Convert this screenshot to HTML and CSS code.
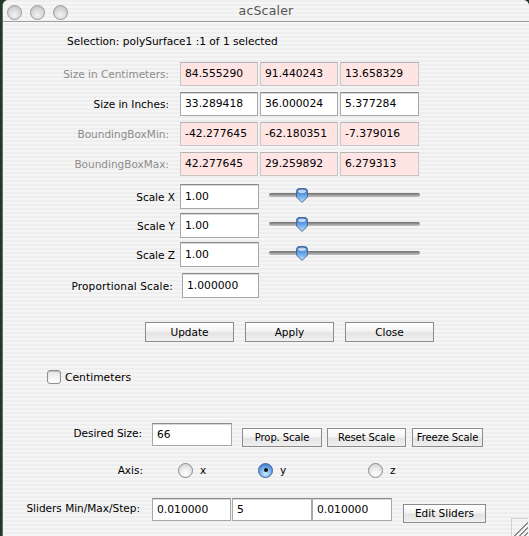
FILE: index.html
```html
<!DOCTYPE html>
<html>
<head>
<meta charset="utf-8">
<link rel="stylesheet" href="styles.css">
</head>
<body>
<div class="window">
  <div class="titlebar">
    <div class="lights"><span class="light"></span><span class="light"></span><span class="light"></span></div>
    <div class="title">acScaler</div>
  </div>
  <div class="content">
    <div class="selection">Selection: polySurface1 :1 of 1 selected</div>

    <div class="toprows">
      <div class="row">
        <div class="lbl lbl-top dis">Size in Centimeters:</div>
        <div class="fields3"><div class="fld pink w78">84.555290</div><div class="fld pink w78">91.440243</div><div class="fld pink w79">13.658329</div></div>
      </div>
      <div class="row">
        <div class="lbl lbl-top">Size in Inches:</div>
        <div class="fields3"><div class="fld w78">33.289418</div><div class="fld w78">36.000024</div><div class="fld w79">5.377284</div></div>
      </div>
      <div class="row">
        <div class="lbl lbl-top dis">BoundingBoxMin:</div>
        <div class="fields3"><div class="fld pink w78">-42.277645</div><div class="fld pink w78">-62.180351</div><div class="fld pink w79">-7.379016</div></div>
      </div>
      <div class="row">
        <div class="lbl lbl-top dis">BoundingBoxMax:</div>
        <div class="fields3"><div class="fld pink w78">42.277645</div><div class="fld pink w78">29.259892</div><div class="fld pink w79">6.279313</div></div>
      </div>
    </div>

    <div class="scalerows">
      <div class="row srow">
        <div class="lbl lbl-scale">Scale X</div>
        <div class="fld w79 tall">1.00</div>
        <div class="slider"><div class="track"></div>
          <svg class="thumb" width="14" height="17" viewBox="0 0 14 17"><defs><linearGradient id="t1" x1="0" y1="0" x2="0" y2="1"><stop offset="0" stop-color="#2f6cc0"/><stop offset=".55" stop-color="#6eaaea"/><stop offset="1" stop-color="#c4e4ff"/></linearGradient></defs><path d="M1.5 4.5 Q1.5 1.5 4.5 1.5 H9.5 Q12.5 1.5 12.5 4.5 V10 L7 15.5 L1.5 10 Z" fill="url(#t1)" stroke="#4b6790"/><ellipse cx="7" cy="4.3" rx="4" ry="1.8" fill="#fff" opacity=".65"/></svg>
        </div>
      </div>
      <div class="row srow">
        <div class="lbl lbl-scale">Scale Y</div>
        <div class="fld w79 tall">1.00</div>
        <div class="slider"><div class="track"></div>
          <svg class="thumb" width="14" height="17" viewBox="0 0 14 17"><defs><linearGradient id="t2" x1="0" y1="0" x2="0" y2="1"><stop offset="0" stop-color="#2f6cc0"/><stop offset=".55" stop-color="#6eaaea"/><stop offset="1" stop-color="#c4e4ff"/></linearGradient></defs><path d="M1.5 4.5 Q1.5 1.5 4.5 1.5 H9.5 Q12.5 1.5 12.5 4.5 V10 L7 15.5 L1.5 10 Z" fill="url(#t2)" stroke="#4b6790"/><ellipse cx="7" cy="4.3" rx="4" ry="1.8" fill="#fff" opacity=".65"/></svg>
        </div>
      </div>
      <div class="row srow">
        <div class="lbl lbl-scale">Scale Z</div>
        <div class="fld w79 tall">1.00</div>
        <div class="slider"><div class="track"></div>
          <svg class="thumb" width="14" height="17" viewBox="0 0 14 17"><defs><linearGradient id="t3" x1="0" y1="0" x2="0" y2="1"><stop offset="0" stop-color="#2f6cc0"/><stop offset=".55" stop-color="#6eaaea"/><stop offset="1" stop-color="#c4e4ff"/></linearGradient></defs><path d="M1.5 4.5 Q1.5 1.5 4.5 1.5 H9.5 Q12.5 1.5 12.5 4.5 V10 L7 15.5 L1.5 10 Z" fill="url(#t3)" stroke="#4b6790"/><ellipse cx="7" cy="4.3" rx="4" ry="1.8" fill="#fff" opacity=".65"/></svg>
        </div>
      </div>
      <div class="row prow">
        <div class="lbl lbl-prop">Proportional Scale:</div>
        <div class="fld wprop tall">1.000000</div>
      </div>
    </div>

    <div class="btnrow">
      <div class="btn bmain">Update</div>
      <div class="btn bmain">Apply</div>
      <div class="btn bmain">Close</div>
    </div>

    <div class="checkrow">
      <span class="checkbox"></span><span class="checklbl">Centimeters</span>
    </div>

    <div class="row desired">
      <div class="lbl lbl-des">Desired Size:</div>
      <div class="fld w80 mid">66</div>
      <div class="dbtns">
        <div class="btn bsm w80">Prop. Scale</div>
        <div class="btn bsm w79">Reset Scale</div>
        <div class="btn bsm w71">Freeze Scale</div>
      </div>
    </div>

    <div class="row axis">
      <div class="lbl lbl-axis">Axis:</div>
      <div class="rgroup g1"><span class="radio"></span><span class="rlbl">x</span></div>
      <div class="rgroup g2"><span class="radio on"></span><span class="rlbl">y</span></div>
      <div class="rgroup"><span class="radio"></span><span class="rlbl">z</span></div>
    </div>

    <div class="row sliders">
      <div class="lbl lbl-sl">Sliders Min/Max/Step:</div>
      <div class="fld w79 mid">0.010000</div>
      <div class="fld w80 mid ml1">5</div>
      <div class="fld w80 mid">0.010000</div>
      <div class="btn bsm bedit">Edit Sliders</div>
    </div>
  </div>
  <div class="grip"></div>
</div>
</body>
</html>
```

FILE: styles.css
```css
html, body {
  margin: 0;
  padding: 0;
}
body {
  width: 529px;
  height: 536px;
  overflow: hidden;
  background: #1f3b26;
  font-family: "DejaVu Sans", "Liberation Sans", sans-serif;
  color: #000;
}
.window {
  position: relative;
  margin-left: 2px;
  width: 526px;
  height: 560px;
  border-left: 1px solid #6c6c6c;
  border-radius: 6px 6px 0 0;
  background: repeating-linear-gradient(to bottom, #eeeeee 0, #eeeeee 2px, #f5f5f5 2px, #f5f5f5 4px);
}
.titlebar {
  height: 21px;
  border-bottom: 1px solid #a2a2a2;
  border-radius: 6px 6px 0 0;
  display: flex;
  align-items: center;
  position: relative;
  background: repeating-linear-gradient(to bottom, #efefef 0, #efefef 2px, #f6f6f6 2px, #f6f6f6 4px);
}
.lights {
  display: flex;
  gap: 8px;
  padding-left: 4px;
  padding-top: 3px;
}
.light {
  width: 13px;
  height: 13px;
  border-radius: 50%;
  border: 1px solid #9a9a9a;
  background: radial-gradient(circle at 50% 70%, #f4f4f4 0, #d6d6d6 55%, #b8b8b8 100%);
}
.title {
  position: absolute;
  left: 0;
  right: 0;
  top: 3px;
  text-align: center;
  font-size: 12.5px;
  color: #555;
  letter-spacing: 0.2px;
}
.content {
  display: flex;
  flex-direction: column;
  font-size: 10.5px;
}
.selection {
  margin-top: 9px;
  height: 20px;
  line-height: 20px;
  padding-left: 64px;
  font-size: 10.6px;
}
.toprows {
  margin-top: 11px;
  display: flex;
  flex-direction: column;
  gap: 6px;
}
.row {
  display: flex;
  align-items: center;
}
.lbl {
  flex: none;
  text-align: right;
  white-space: nowrap;
}
.dis { color: #8c8c8c; }
.lbl-top { width: 166px; margin-right: 11px; }
.fields3 { display: flex; gap: 2px; }
.fld {
  box-sizing: border-box;
  height: 24px;
  line-height: 22px;
  padding-left: 4px;
  font-size: 10.75px;
  background: #fff;
  border: 1px solid #a8a8a8;
  border-top-color: #8a8a8a;
  box-shadow: inset 0 1px 0 #d8d8d8;
  white-space: nowrap;
  overflow: hidden;
}
.fld.pink {
  background: #ffe4e4;
  border-color: #c6c6c6;
  border-top-color: #b4b4b4;
  box-shadow: none;
}
.w78 { width: 78px; }
.w79 { width: 79px; }
.w80 { width: 80px; }
.w71 { width: 71px; }
.tall { height: 25px; line-height: 23px; }
.mid { height: 23px; line-height: 21px; }

.scalerows {
  margin-top: 8px;
  display: flex;
  flex-direction: column;
  gap: 4px;
}
.lbl-scale { width: 172px; margin-right: 5px; }
.slider {
  position: relative;
  width: 151px;
  height: 25px;
  margin-left: 10px;
  display: flex;
  align-items: center;
}
.track {
  width: 100%;
  height: 4px;
  margin-top: -4px;
  border-radius: 3px;
  background: linear-gradient(to bottom, #6a6a6a, #9a9a9a 50%, #c4c4c4);
}
.thumb {
  position: absolute;
  left: 26px;
  top: 3px;
}
.prow { margin-top: 2px; }
.lbl-prop { width: 170px; margin-right: 9px; letter-spacing: 0.15px; }
.wprop { width: 77px; }

.btnrow {
  margin-top: 24px;
  display: flex;
  gap: 11px;
  padding-left: 142px;
}
.btn {
  box-sizing: border-box;
  height: 20px;
  line-height: 18px;
  text-align: center;
  border: 1px solid #8c8c8c;
  background: linear-gradient(to bottom, #ffffff 0, #f4f4f4 45%, #e4e4e4 55%, #f0f0f0 100%);
  white-space: nowrap;
  font-size: 10.5px;
}
.bmain { width: 89px; }
.checkrow {
  margin-top: 28px;
  height: 14px;
  display: flex;
  align-items: center;
  padding-left: 44px;
}
.checkbox {
  box-sizing: border-box;
  width: 14px;
  height: 14px;
  border: 1px solid #8e8e8e;
  border-radius: 3px;
  background: linear-gradient(to bottom, #e6e6e6, #ffffff);
  box-shadow: inset 0 1px 1px #bbb;
}
.checklbl { margin-left: 4px; font-size: 10.75px; }

.desired {
  margin-top: 39px;
  align-items: flex-start;
}
.lbl-des { width: 139px; margin-right: 10px; line-height: 20px; }
.dbtns {
  display: flex;
  margin-left: 10px;
  margin-top: 5px;
}
.bsm { height: 19px; line-height: 17px; font-size: 10px; letter-spacing: -0.1px; overflow: hidden; }
.dbtns .btn:nth-child(2) { margin-left: 5px; }
.dbtns .btn:nth-child(3) { margin-left: 6px; }

.axis {
  margin-top: 15px;
  height: 16px;
}
.lbl-axis { width: 140px; margin-right: 35px; }
.rgroup { display: flex; align-items: center; }
.g1 { width: 80px; }
.g2 { width: 110px; }
.radio {
  box-sizing: border-box;
  width: 15px;
  height: 15px;
  border-radius: 50%;
  border: 1px solid #8a8a8a;
  background: radial-gradient(circle at 50% 75%, #ffffff 0, #eaeaea 50%, #c8c8c8 100%);
  position: relative;
}
.radio.on {
  border-color: #3b5f98;
  background: radial-gradient(circle at 50% 75%, #cfeaff 0, #6aa6e8 55%, #2e64b8 100%);
}
.radio.on::after {
  content: "";
  position: absolute;
  left: 4.5px;
  top: 4.5px;
  width: 4px;
  height: 4px;
  border-radius: 50%;
  background: #111;
}
.rlbl { margin-left: 7px; font-size: 10.5px; }

.sliders {
  margin-top: 20px;
  align-items: flex-start;
}
.lbl-sl { width: 137px; margin-right: 12px; line-height: 20px; }
.ml1 { margin-left: 1px; }
.bedit { width: 83px; margin-left: 11px; margin-top: 6px; font-size: 10.5px; letter-spacing: 0; }

.grip {
  position: absolute;
  right: 1px;
  top: 518px;
  width: 16px;
  height: 18px;
  border-left: 1px solid #d0d0d0;
  border-top: 1px solid #d0d0d0;
  background: linear-gradient(135deg, transparent 0 55%, #8c8c8c 55% 60%, transparent 60% 70%, #8c8c8c 70% 75%, transparent 75% 85%, #8c8c8c 85% 90%, transparent 90%);
}
```
